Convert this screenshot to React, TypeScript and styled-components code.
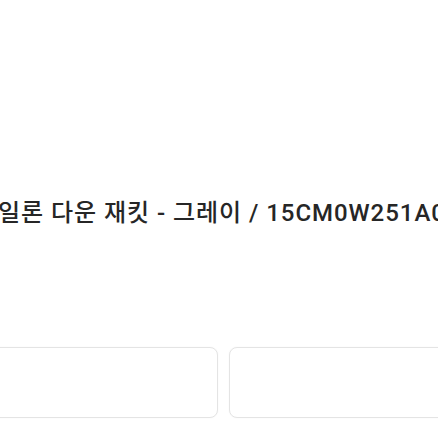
import React from 'react'
import styled, { createGlobalStyle } from 'styled-components'

const GlobalStyle = createGlobalStyle`
  html, body {
    margin: 0;
    padding: 0;
    background: #ffffff;
    overflow: hidden;
  }
  body {
    font-family: Roboto, 'Noto Sans CJK KR', 'Noto Sans', sans-serif;
  }
`

const Page = styled.div`
  width: 438px;
  height: 438px;
  overflow: hidden;
  display: flex;
  flex-direction: column;
`

const Title = styled.h1`
  margin: 198px 0 0 -25px;
  font-size: 24px;
  line-height: 30px;
  font-weight: 500;
  color: #262626;
  white-space: nowrap;
  letter-spacing: 0.95px;
`

const ButtonRow = styled.div`
  display: flex;
  gap: 11px;
  margin: 119px 0 0 -37px;
  width: 520px;
`

const OptionButton = styled.button`
  flex: 1 1 0;
  height: 71px;
  background: #ffffff;
  border: 1px solid #e4e4e4;
  border-radius: 8px;
  box-shadow: 0 0 2px rgba(0, 0, 0, 0.04);
`

const App = () => (
  <>
    <GlobalStyle />
    <Page>
      <Title>나일론 다운 재킷 - 그레이 / 15CM0W251A03</Title>
      <ButtonRow>
        <OptionButton />
        <OptionButton />
      </ButtonRow>
    </Page>
  </>
)

export default App
